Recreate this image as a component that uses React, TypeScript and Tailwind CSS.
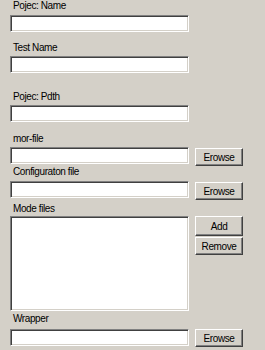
import React from 'react';

// Classic 3D look: sunken fields, raised buttons
const sunken =
  'bg-white border border-t-[#808080] border-l-[#808080] border-b-white border-r-white shadow-[inset_1px_1px_0_#404040,inset_-1px_-1px_0_#d4d0c8]';
const raised =
  'bg-[#d4d0c8] border border-t-white border-l-white border-b-[#404040] border-r-[#404040] shadow-[inset_-1px_-1px_0_#808080] flex items-center justify-center text-black';

function Label({ text, className = '' }: { text: string; className?: string }) {
  return <div className={`h-[12px] pl-[3px] leading-[12px] ${className}`}>{text}</div>;
}

function Field({ className = '' }: { className?: string }) {
  return <div className={`w-[179px] h-[17px] shrink-0 ${sunken} ${className}`} />;
}

function Button({ text, className = '' }: { text: string; className?: string }) {
  return <div className={`w-[48px] h-[18px] shrink-0 ${raised} ${className}`}>{text}</div>;
}

export default function App() {
  return (
    <div className="w-[265px] h-[350px] bg-[#d4d0c8] overflow-hidden pl-[10px] font-['Liberation_Sans',Arial,sans-serif] text-[10px] tracking-[-0.4px] text-black">
      <Label text="Pojec: Name" />
      <Field className="mt-[3px]" />

      <Label text="Test Name" className="mt-[10px]" />
      <Field className="mt-[2px]" />

      <Label text="Pojec: Pdth" className="mt-[18px]" />
      <Field className="mt-[2px]" />

      <Label text="mor-file" className="mt-[11px]" />
      <div className="mt-[2px] flex items-start gap-[6px]">
        <Field />
        <Button text="Erowse" className="mt-[1px]" />
      </div>

      <Label text="Configuraton file" />
      <div className="mt-[3px] flex items-start gap-[6px]">
        <Field />
        <Button text="Erowse" className="mt-[1px]" />
      </div>

      <Label text="Mode files" className="mt-[3px]" />
      <div className="mt-[1px] flex items-start gap-[6px]">
        <div className={`w-[179px] h-[95px] shrink-0 ${sunken}`} />
        <div className="flex flex-col gap-[1px]">
          <Button text="Add" className="h-[20px]" />
          <Button text="Remove" />
        </div>
      </div>

      <Label text="Wrapper" className="mt-[2px]" />
      <div className="mt-[4px] flex items-start gap-[6px]">
        <Field />
        <Button text="Erowse" />
      </div>
    </div>
  );
}
